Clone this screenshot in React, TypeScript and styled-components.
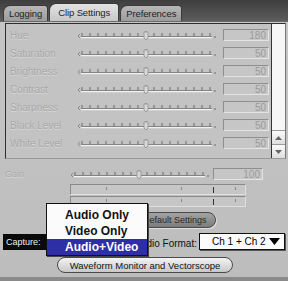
import React, { FC } from "react";
import styled, { createGlobalStyle } from "styled-components";

const GlobalStyle = createGlobalStyle`
  html, body { margin: 0; padding: 0; }
  body { background: #c2c2c2; font-family: "Liberation Sans", "DejaVu Sans", Arial, sans-serif; }
`;

const SETTINGS = [
  { label: "Hue", value: 180 },
  { label: "Saturation", value: 50 },
  { label: "Brightness", value: 50 },
  { label: "Contrast", value: 50 },
  { label: "Sharpness", value: 50 },
  { label: "Black Level", value: 50 },
  { label: "White Level", value: 50 },
];

const Slider: FC = () => {
  const ticks = [];
  for (let i = 0; i <= 16; i++) {
    const x = 6 + i * 8;
    ticks.push(
      <line key={i} x1={x} x2={x} y1={i === 8 ? 1 : 3} y2={6} stroke='#6a6a6a' strokeWidth={1} />
    );
  }
  return (
    <svg width='142' height='11' viewBox='0 0 142 11'>
      <path d='M4 4 L2 6 L4 8' stroke='#8a8a8a' fill='none' />
      {ticks}
      <line x1='5' x2='136' y1='6.5' y2='6.5' stroke='#5e5e5e' />
      <line x1='5' x2='136' y1='7.5' y2='7.5' stroke='#f2f2f2' strokeWidth={1.5} />
      <circle cx='139' cy='7' r='1' fill='#8a8a8a' />
      <path d='M68 2 L72 2 L72 8 L70 10 L68 8 Z' fill='#d8d8d8' stroke='#9a9a9a' />
    </svg>
  );
};

const App: FC = () => {
  return (
    <Window>
      <GlobalStyle />
      <TabBar>
        <Tab>Logging</Tab>
        <Tab active>Clip Settings</Tab>
        <Tab>Preferences</Tab>
      </TabBar>

      <ScrollPane>
        <PaneContent>
          {SETTINGS.map(({ label, value }) => (
            <SettingRow key={label}>
              <RowLabel>{label}</RowLabel>
              <Slider />
              <ValueField>{value}</ValueField>
            </SettingRow>
          ))}
        </PaneContent>
        <ScrollBar>
          <ArrowButton>
            <svg width='9' height='6' viewBox='0 0 9 6'>
              <path d='M4.5 1 L8 5 L1 5 Z' fill='#666' />
            </svg>
          </ArrowButton>
          <ArrowButton>
            <svg width='9' height='6' viewBox='0 0 9 6'>
              <path d='M1 1 L8 1 L4.5 5 Z' fill='#666' />
            </svg>
          </ArrowButton>
        </ScrollBar>
      </ScrollPane>

      <GainRow>
        <RowLabel narrow>Gain</RowLabel>
        <Slider />
        <ValueField wide>100</ValueField>
      </GainRow>

      <LevelBars>
        <LevelBar>
          <Tick pos={35} />
          <Tick pos={110} />
          <Tick pos={142} strong />
          <Tick pos={164} />
        </LevelBar>
        <LevelBar>
          <Tick pos={35} />
          <Tick pos={110} />
          <Tick pos={142} strong />
          <Tick pos={164} />
        </LevelBar>
      </LevelBars>

      <DefaultRow>
        <DarkPill>Use Default Settings</DarkPill>
      </DefaultRow>

      <CaptureRow>
        <CaptureLabel>Capture:</CaptureLabel>
        <FormatLabel>Audio Format:</FormatLabel>
        <Select>
          <span>Ch 1 + Ch 2</span>
          <svg width='11' height='7' viewBox='0 0 11 7'>
            <path d='M0 0 L11 0 L5.5 7 Z' fill='#000' />
          </svg>
        </Select>
      </CaptureRow>

      <BottomRow>
        <LightPill>Waveform Monitor and Vectorscope</LightPill>
      </BottomRow>

      <PopupMenu>
        <MenuItem>Audio Only</MenuItem>
        <MenuItem>Video Only</MenuItem>
        <MenuItem selected>Audio+Video</MenuItem>
      </PopupMenu>
    </Window>
  );
};

export default App;

const Window = styled.div`
  position: relative;
  width: 288px;
  height: 281px;
  overflow: hidden;
  background: linear-gradient(#c6c6c6, #bdbdbd);
  display: flex;
  flex-direction: column;
  border-bottom: 4px solid #8a8a8a;
  box-sizing: border-box;
`;

const TabBar = styled.div`
  height: 21px;
  background: linear-gradient(#3e3e3e, #5c5c5c);
  display: flex;
  align-items: flex-end;
  padding-left: 3px;
  gap: 1px;
  border-bottom: 1px solid #6a6a6a;
`;

const Tab = styled.div<{ active?: boolean }>`
  height: ${({ active }) => (active ? 18 : 16)}px;
  padding: 0 ${({ active }) => (active ? 8 : 5)}px;
  display: flex;
  align-items: center;
  font-size: 9.5px;
  letter-spacing: -0.1px;
  color: #1e1e1e;
  background: ${({ active }) =>
    active ? "linear-gradient(#e2e2e2, #c8c8c8)" : "linear-gradient(#b8b8b8, #9c9c9c)"};
  border: 1px solid #3a3a3a;
  border-bottom: none;
  border-radius: 7px 3px 0 0;
  box-sizing: border-box;
`;

const ScrollPane = styled.div`
  margin: 1px 2px 0 5px;
  height: 136px;
  display: flex;
  border: 1px solid #2e2e2e;
  border-right-color: #777;
  border-bottom-color: #999;
  box-sizing: border-box;
`;

const PaneContent = styled.div`
  flex: 1;
  background: #c3c3c3;
  padding-top: 5px;
  display: flex;
  flex-direction: column;
  gap: 6px;
  border-right: 1px solid #333;
`;

const SettingRow = styled.div`
  height: 12px;
  display: flex;
  align-items: center;
`;

const RowLabel = styled.div<{ narrow?: boolean }>`
  width: ${({ narrow }) => (narrow ? 69 : 70)}px;
  padding-left: ${({ narrow }) => (narrow ? 5 : 4)}px;
  font-size: ${({ narrow }) => (narrow ? 9 : 10)}px;
  color: #a8a8a8;
  text-shadow: 0 1px 0 #d8d8d8;
  box-sizing: border-box;
  flex: none;
`;

const ValueField = styled.div<{ wide?: boolean }>`
  margin-left: ${({ wide }) => (wide ? 2 : 5)}px;
  width: ${({ wide }) => (wide ? 50 : 46)}px;
  height: 12px;
  border: 1px solid #8e8e8e;
  border-right-color: #e4e4e4;
  border-bottom-color: #e4e4e4;
  background: #c6c6c6;
  color: #9a9a9a;
  font-size: 10px;
  text-align: right;
  padding-right: 2px;
  line-height: 11px;
  box-sizing: border-box;
`;

const ScrollBar = styled.div`
  width: 13px;
  background: #f6f6f6;
  display: flex;
  flex-direction: column;
  justify-content: flex-end;
`;

const ArrowButton = styled.div`
  height: 13px;
  display: flex;
  align-items: center;
  justify-content: center;
  border-top: 1px solid #9a9a9a;
  background: linear-gradient(#fafafa, #dedede);
`;

const GainRow = styled.div`
  margin-top: 9px;
  height: 12px;
  display: flex;
  align-items: center;
`;

const LevelBars = styled.div`
  margin: 4px 0 0 70px;
  width: 176px;
  display: flex;
  flex-direction: column;
  gap: 1px;
`;

const LevelBar = styled.div`
  position: relative;
  height: 11px;
  border: 1px solid #8a8a8a;
  border-right-color: #e0e0e0;
  border-bottom-color: #e0e0e0;
  background: #c6c6c6;
  box-sizing: border-box;
`;

const Tick = styled.div<{ pos: number; strong?: boolean }>`
  position: absolute;
  left: ${({ pos }) => pos}px;
  top: 2px;
  width: 1px;
  height: ${({ strong }) => (strong ? 6 : 3)}px;
  background: ${({ strong }) => (strong ? "#333" : "#888")};
`;

const DefaultRow = styled.div`
  margin-top: 5px;
  padding-left: 115px;
  display: flex;
`;

const DarkPill = styled.div`
  width: 101px;
  height: 16px;
  border-radius: 8px;
  border: 1px solid #4a4a4a;
  background: linear-gradient(#a4a4a4, #7c7c7c);
  color: #2a2a2a;
  font-size: 9px;
  display: flex;
  align-items: center;
  justify-content: center;
  box-sizing: border-box;
  box-shadow: 1px 1px 0 #e0e0e0;
`;

const CaptureRow = styled.div`
  margin-top: 5px;
  height: 17px;
  display: flex;
  align-items: center;
  padding-left: 3px;
`;

const CaptureLabel = styled.div`
  width: 43px;
  height: 16px;
  background: #0a0a0a;
  color: #f0f0f0;
  font-size: 9px;
  display: flex;
  align-items: center;
  padding-left: 3px;
  box-sizing: border-box;
`;

const FormatLabel = styled.div`
  margin-left: 56px;
  width: 95px;
  text-align: right;
  font-size: 10px;
  color: #111;
  padding-top: 4px;
`;

const Select = styled.div`
  margin-left: 2px;
  width: 86px;
  height: 17px;
  border: 1px solid #111;
  background: #fbfbfb;
  display: flex;
  align-items: center;
  justify-content: space-between;
  padding: 0 4px 0 12px;
  font-size: 10px;
  color: #000;
  box-sizing: border-box;
  box-shadow: 1px 1px 0 #555;
`;

const BottomRow = styled.div`
  margin-top: 7px;
  padding-left: 57px;
  display: flex;
`;

const LightPill = styled.div`
  width: 176px;
  height: 16px;
  border-radius: 8px;
  border: 1px solid #4a4a4a;
  background: linear-gradient(#f4f4f4, #c8c8c8);
  color: #111;
  font-size: 9.5px;
  display: flex;
  align-items: center;
  justify-content: center;
  box-sizing: border-box;
`;

const PopupMenu = styled.div`
  position: absolute;
  left: 46px;
  top: 203px;
  width: 102px;
  padding-top: 3px;
  background: #fbfbfb;
  border: 1px solid #111;
  box-shadow: 1px 1px 0 #444;
  display: flex;
  flex-direction: column;
  box-sizing: border-box;
`;

const MenuItem = styled.div<{ selected?: boolean }>`
  height: 16px;
  padding-left: 18px;
  display: flex;
  align-items: center;
  font-size: 12px;
  font-weight: bold;
  color: ${({ selected }) => (selected ? "#ffffff" : "#111111")};
  background: ${({ selected }) => (selected ? "#2e2ea6" : "transparent")};
`;
